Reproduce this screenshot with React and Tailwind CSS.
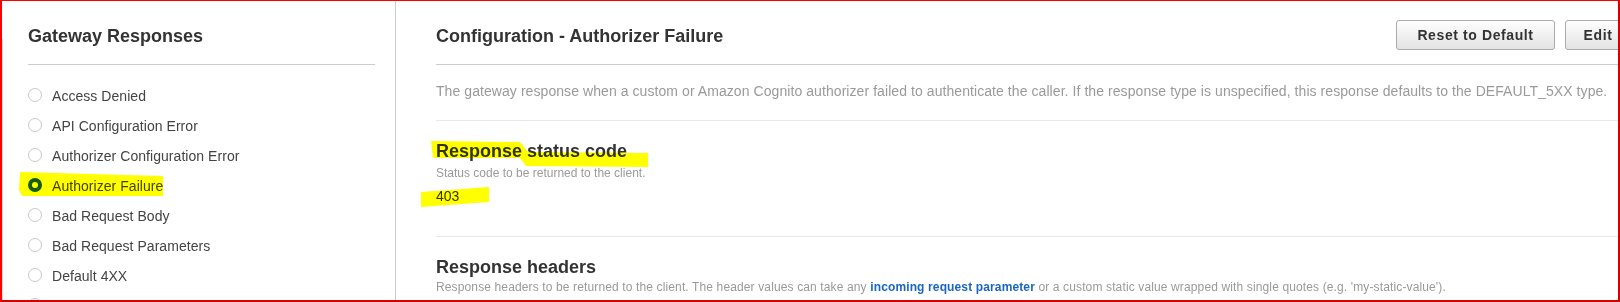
export default function App() {
  const items = [
    "Access Denied",
    "API Configuration Error",
    "Authorizer Configuration Error",
    "Authorizer Failure",
    "Bad Request Body",
    "Bad Request Parameters",
    "Default 4XX",
    "Default 5XX",
  ];
  return (
    <div className="relative flex w-[1620px] h-[302px] overflow-hidden bg-white border-t border-t-[#ff0000] border-l-2 border-l-[#ff0000] border-r-2 border-r-[#d40000] border-b-2 border-b-[#d40000] font-['Liberation_Sans',Arial,sans-serif]">
      {/* Left panel */}
      <div className="flex w-[394px] shrink-0 border-r border-r-[#cccccc]">
        <div className="w-px shrink-0 mt-[38px] bg-[#dddddd]" />
        <div className="flex-1 pl-[25px] pr-[20px] pt-[23px]">
          <h2 className="text-[18px] leading-[24px] font-bold text-[#333333]">Gateway Responses</h2>
          <div className="mt-[16px] h-px bg-[#cccccc]" />
          <ul className="mt-[15px]">
            {items.map((it) => {
              const sel = it === "Authorizer Failure";
              return (
                <li key={it} className="flex h-[30px] items-center gap-[10px] text-[14px] tracking-[0.05px] text-[#444444]">
                  {sel ? (
                    <span className="box-border block w-[14px] h-[14px] rounded-full border-4 border-[#145c7c] bg-white" />
                  ) : (
                    <span className="box-border block w-[14px] h-[14px] rounded-full border border-[#c8c8c8] bg-white" />
                  )}
                  <span className="leading-[30px] pt-[1px]">{it}</span>
                </li>
              );
            })}
          </ul>
        </div>
      </div>

      {/* Right panel */}
      <div className="flex w-[1255px] shrink-0 flex-col pl-[40px]">
        <div className="mt-[19px] flex h-[30px] items-center justify-between pr-[20px]">
          <h2 className="pt-[1px] text-[18px] leading-[24px] font-bold text-[#333333]">Configuration - Authorizer Failure</h2>
          <div className="flex gap-[10px]">
            <button className="h-[30px] w-[159px] rounded-[3px] border border-[#ababab] bg-linear-to-b from-[#fefefe] to-[#e3e3e3] text-[14px] font-bold tracking-[0.6px] text-[#333333]">
              Reset to Default
            </button>
            <button className="h-[30px] w-[66px] rounded-[3px] border border-[#ababab] bg-linear-to-b from-[#fefefe] to-[#e3e3e3] text-[14px] font-bold tracking-[0.6px] text-[#333333]">
              Edit
            </button>
          </div>
        </div>
        <div className="mt-[14px] h-px bg-[#cccccc]" />
        <p className="mt-[16px] text-[14px] leading-[20px] tracking-[0.07px] text-[#9a9a9a]">
          The gateway response when a custom or Amazon Cognito authorizer failed to authenticate the caller. If the response type is unspecified, this response defaults to the DEFAULT_5XX type.
        </p>
        <div className="mt-[19px] h-px bg-[#e8e8e8]" />
        <h3 className="mt-[18px] text-[18px] leading-[24px] font-bold text-[#333333]">Response status code</h3>
        <p className="mt-[2px] text-[12px] leading-[16px] text-[#9a9a9a]">Status code to be returned to the client.</p>
        <p className="mt-[5px] text-[14px] leading-[20px] text-[#333333]">403</p>
        <div className="mt-[30px] h-px bg-[#e8e8e8]" />
        <h3 className="mt-[18px] text-[18px] leading-[24px] font-bold text-[#333333]">Response headers</h3>
        <p className="text-[12px] leading-[16px] tracking-[0.13px] text-[#9a9a9a]">
          Response headers to be returned to the client. The header values can take any{" "}
          <span className="font-bold text-[#1a66c2]">incoming request parameter</span> or a custom static value wrapped with single quotes (e.g. 'my-static-value').
        </p>
      </div>

      {/* Highlighter marks */}
      <svg
        className="pointer-events-none absolute left-[-2px] top-[-1px] w-[1620px] h-[302px] mix-blend-multiply"
        viewBox="0 0 1620 302"
      >
        <polygon fill="#ffff00" points="20,172 163,176 163,196 22,196 19,190" />
        <polygon fill="#ffff00" points="431,141 520,142 528,152 648,153 648,167 526,166 520,158 433,158" />
        <polygon fill="#ffff00" points="421,192 489,187 489,202 421,207" />
      </svg>
    </div>
  );
}
